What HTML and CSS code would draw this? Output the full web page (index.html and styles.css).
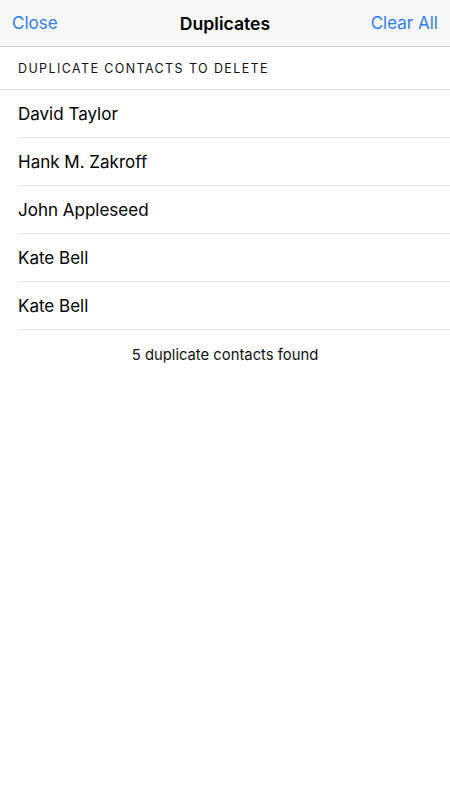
FILE: index.html
```html
<!DOCTYPE html>
<html>
<head>
<meta charset="utf-8">
<link rel="stylesheet" href="styles.css">
</head>
<body>
<div class="nav">
  <span class="nav-btn nav-left">Close</span>
  <span class="nav-title">Duplicates</span>
  <span class="nav-btn nav-right">Clear All</span>
</div>
<div class="section-header">DUPLICATE CONTACTS TO DELETE</div>
<ul class="list">
  <li class="row">David Taylor</li>
  <li class="row">Hank M. Zakroff</li>
  <li class="row">John Appleseed</li>
  <li class="row">Kate Bell</li>
  <li class="row">Kate Bell</li>
</ul>
<div class="footer">5 duplicate contacts found</div>
</body>
</html>
```
FILE: styles.css
```css
html, body {
  margin: 0;
  padding: 0;
  background: #ffffff;
  font-family: Inter, "Liberation Sans", sans-serif;
  color: #000;
}
.nav {
  height: 46px;
  background: #f7f7f7;
  border-bottom: 1px solid #d8d8d8;
  display: grid;
  grid-template-columns: 1fr auto 1fr;
  align-items: center;
  padding: 0 12px;
}
.nav-btn {
  font-size: 17px;
  color: #2f7cf6;
}
.nav-left {
  justify-self: start;
}
.nav-right {
  justify-self: end;
}
.nav-title {
  font-size: 17.6px;
  font-weight: 600;
}
.section-header {
  height: 42px;
  display: flex;
  align-items: center;
  padding-left: 18px;
  font-size: 12.5px;
  letter-spacing: 1.4px;
  color: #111;
  border-bottom: 1px solid #dedede;
}
.list {
  list-style: none;
  margin: 0;
  padding: 0 0 0 18px;
}
.row {
  height: 47px;
  display: flex;
  align-items: center;
  font-size: 17px;
  border-bottom: 1px solid #e2e2e2;
}
.footer {
  text-align: center;
  font-size: 14.8px;
  padding-top: 16px;
  color: #111;
}
```
